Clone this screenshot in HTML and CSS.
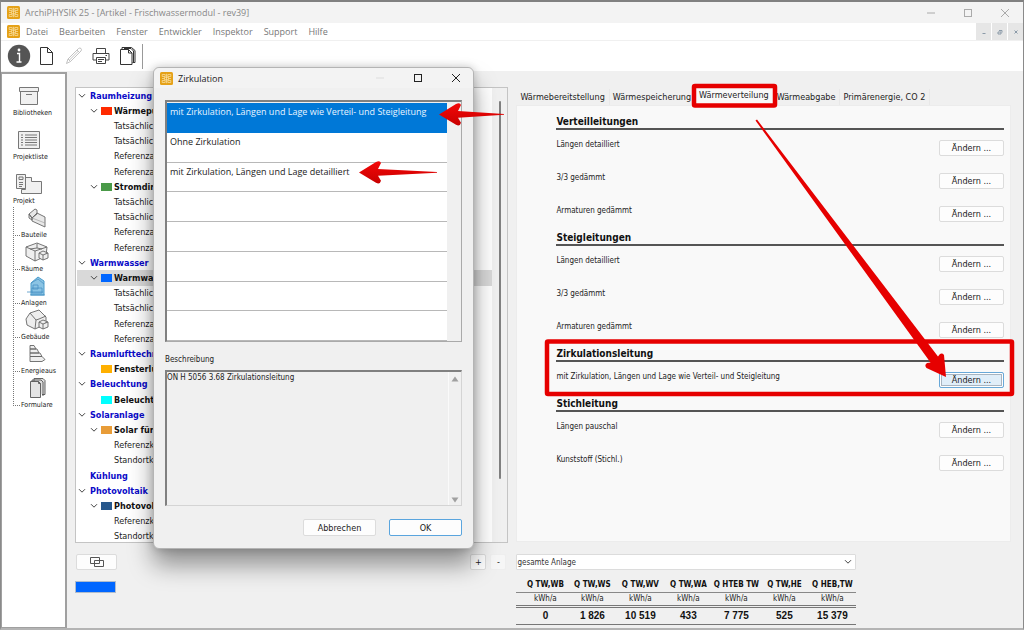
FILE: index.html
```html
<!DOCTYPE html>
<html lang="de">
<head>
<meta charset="utf-8">
<title>ArchiPHYSIK 25</title>
<link rel="stylesheet" href="styles.css">
</head>
<body>
<svg class="defs" aria-hidden="true">
  <symbol id="logo" viewBox="0 0 13 13">
    <rect width="13" height="13" rx="1.5" fill="#e5a117"/>
    <g fill="none" stroke="#fbe3ab" stroke-width=".7">
      <path d="M2.2 2.5h3v2h-3zM7.8 2.5h3v2h-3zM2.2 8.5h3v2h-3zM7.8 8.5h3v2h-3z"/>
      <path d="M6.5 1.8v9.4M4.5 5.3h4v2.4h-4zM2 6.5h2.5M8.5 6.5H11"/>
    </g>
  </symbol>
  <symbol id="chev" viewBox="0 0 8 6"><path d="M1 1.2l3 3 3-3" fill="none" stroke="#444" stroke-width="1"/></symbol>
  <linearGradient id="red" x1="0" y1="0" x2="0" y2="1"><stop offset="0" stop-color="#f40808"/><stop offset="1" stop-color="#c80000"/></linearGradient>
</svg>

<div class="window">
  <header class="titlebar">
    <svg class="logo"><use href="#logo"/></svg>
    <span class="grow">ArchiPHYSIK 25 - [Artikel - Frischwassermodul - rev39]</span>
    <div class="winbtns">
      <button type="button" aria-label="Minimieren"><svg viewBox="0 0 10 10"><path d="M1 5h8"/></svg></button>
      <button type="button" aria-label="Maximieren"><svg viewBox="0 0 10 10"><rect x="1.5" y="1.5" width="7" height="7"/></svg></button>
      <button type="button" aria-label="Schließen"><svg viewBox="0 0 10 10"><path d="M1 1l8 8M9 1l-8 8"/></svg></button>
    </div>
  </header>

  <nav class="menubar">
    <svg class="logo"><use href="#logo"/></svg>
    <a href="#">Datei</a><a href="#">Bearbeiten</a><a href="#">Fenster</a><a href="#">Entwickler</a><a href="#">Inspektor</a><a href="#">Support</a><a href="#">Hilfe</a>
    <div class="mdi">
      <button type="button" aria-label="Kind minimieren"><svg viewBox="0 0 6 6"><path d="M1.500 4.500h3"/></svg></button>
      <button type="button" aria-label="Kind wiederherstellen"><svg viewBox="0 0 6 6"><path d="M2 1.500h3v2M1 3h3v2H1z"/></svg></button>
      <button type="button" aria-label="Kind schließen"><svg viewBox="0 0 6 6"><path d="M1.500 1.500l3 3M4.500 1.500l-3 3"/></svg></button>
    </div>
  </nav>

  <div class="toolbar">
    <button type="button" aria-label="Info"><svg viewBox="0 0 24 24"><circle cx="12" cy="12" r="11.200" fill="#555"/><circle cx="12" cy="6" r="1.400" fill="#fff"/><path d="M10 9.500h2.500v8M9.500 18h5" fill="none" stroke="#fff" stroke-width="1.400"/></svg></button>
    <button type="button" aria-label="Neu"><svg viewBox="0 0 24 24"><path d="M6.500 3.500h7l5 5v12h-12zM13.500 3.500v5h5" fill="#fff" stroke="#333"/></svg></button>
    <button type="button" aria-label="Bearbeiten"><svg viewBox="0 0 24 24"><path d="M5.500 19.500l1.500-4.500L17.500 4.500q1.500-1 2.500 0t0 2.500L9.500 17.500zM7 15l2.500 2.500M16 6l2.500 2.500M8.500 16L17.500 7" fill="none" stroke="#bbb" stroke-width=".9"/></svg></button>
    <button type="button" aria-label="Drucken"><svg viewBox="0 0 24 24"><path d="M8.500 9V4.500h9V9M8 16H5V9.500h16V16h-3M8.500 13.500h9v6h-9zM10 15.500h6M10 17.500h4M17.500 11.500h1.500" fill="none" stroke="#444"/></svg></button>
    <button type="button" aria-label="Dokumente"><svg viewBox="0 0 24 24"><path d="M5.500 5.500h8l3.500 3.500v11.500H5.500zM13.500 5.500v3.500h3.500M7 5V3.500h9.500l3.500 3V18.500H17.500M9 4.500h7l2.500 2.500v11" fill="none" stroke="#333"/></svg></button>
    <span class="sep"></span>
  </div>

  <main class="body">
    <aside class="sidebar">
      <ul class="nav">
        <li><a href="#"><svg class="i28" viewBox="0 0 28 20"><path d="M4.500 1.500h19v4h-19zM5.500 5.500h17v13h-17zM11 8.500h6" fill="#f0f0f0" stroke="#777"/></svg><span>Bibliotheken</span></a></li>
        <li><a href="#"><svg class="i28" viewBox="0 0 28 20"><path d="M3.500 1.500h21v17h-21z" fill="#f0f0f0" stroke="#777"/><path d="M6 5h2M6 7.500h2M6 10h2M6 12.500h2M6 15h2M10 5h12M10 7.500h12M10 10h12M10 12.500h12M10 15h12" stroke="#777"/></svg><span>Projektliste</span></a></li>
        <li><a href="#"><svg class="i28" viewBox="0 0 28 20"><path d="M10.500 3.500h6v4h10v12h-20v-4h4z" fill="#f0f0f0" stroke="#777"/><path d="M1.500.500h9v14h-9z" fill="#f0f0f0" stroke="#777"/><path d="M4 3h4v2.500H4zM4 8.500h4M4 10.500h4M4 12.500h3" fill="none" stroke="#777"/></svg><span>Projekt</span></a></li>
      </ul>
      <ul class="nav sub">
        <li><a href="#"><svg class="i24" viewBox="0 0 24 22"><path d="M4 7l6-5 2 1v4l-5 4zM4 7v4l3 2v-2zM12 6l8 4v10L7 14v-3z" fill="#e8e8e8" stroke="#666" stroke-width=".9"/><path d="M7 11l13 5" stroke="#999" fill="none" stroke-width=".6"/></svg><span>Bauteile</span></a></li>
        <li><a href="#"><svg class="i24" viewBox="0 0 24 22"><path d="M1 6l11-4 10 4-1 9-11 5-9-5z" fill="#eee" stroke="#666" stroke-width=".9"/><path d="M1 6l9 4 12-4M10 10v10M12 2v5l-7 1M12 7l5 1M14 12l4-2 5 2v5l-5 2-4-2zM14 12l4 2 5-2M18 14v5" fill="#eee" stroke="#666" stroke-width=".9"/></svg><span>Räume</span></a></li>
        <li><a href="#"><svg class="i24" viewBox="0 0 24 22"><path d="M6 8l7-6 6 4v14H6z" fill="#8bc4e4" stroke="#4a9ccb"/><path d="M6 8l7-4 6 5M2 17h16M8 10h5v4H8zM7 13h10v5H7zM5 20h15" fill="none" stroke="#4a93c4" stroke-width=".8"/></svg><span>Anlagen</span></a></li>
        <li><a href="#"><svg class="i24" viewBox="0 0 24 22"><path d="M1 10l4-6 9-3 7 7v7l-11 5-8-4z" fill="#eee" stroke="#666" stroke-width=".9"/><path d="M5 4l6 7-1 9M11 11l3-1 7-3M14 13l4-2 5 2v5l-5 2-4-2zM14 13l4 2 5-2M18 15v5" fill="#eee" stroke="#666" stroke-width=".9"/></svg><span>Gebäude</span></a></li>
        <li><a href="#"><svg class="i24" viewBox="0 0 24 22"><path d="M5 2.500h4l2 3.500H5zM5 6h7l2 4H5zM5 10h10l2 3.500H5zM5 13.500h12l3 3-3 2H5z" fill="#eee" stroke="#666" stroke-width=".9"/></svg><span>Energieaus</span></a></li>
        <li><a href="#"><svg class="i24" viewBox="0 0 24 22"><path d="M9 4V1.500h9l2 2v14h-3M7 5V3h9l2 2v14" fill="#ddd" stroke="#555" stroke-width=".9"/><path d="M5.500 4.500h8l2 2v14h-10zM13.500 4.500v2h2" fill="#e4e4e4" stroke="#555" stroke-width=".9"/></svg><span>Formulare</span></a></li>
      </ul>
    </aside>

    <section class="left">
      <div class="treebox">
        <ul class="tree">
          <li class="g"><svg class="chev"><use href="#chev"/></svg>Raumheizung</li>
          <li class="s"><svg class="chev"><use href="#chev"/></svg><i class="sw red"></i>Wärmepu</li>
          <li>Tatsächlich</li><li>Tatsächlich</li><li>Referenza</li><li>Referenza</li>
          <li class="s"><svg class="chev"><use href="#chev"/></svg><i class="sw green"></i>Stromdire</li>
          <li>Tatsächlich</li><li>Tatsächlich</li><li>Referenza</li><li>Referenza</li>
          <li class="g"><svg class="chev"><use href="#chev"/></svg>Warmwasser</li>
          <li class="s sel"><svg class="chev"><use href="#chev"/></svg><i class="sw blue"></i>Warmwa</li>
          <li>Tatsächlich</li><li>Tatsächlich</li><li>Referenza</li><li>Referenza</li>
          <li class="g"><svg class="chev"><use href="#chev"/></svg>Raumlufttechn</li>
          <li class="s"><span class="chev"></span><i class="sw amber"></i>Fensterlü</li>
          <li class="g"><svg class="chev"><use href="#chev"/></svg>Beleuchtung</li>
          <li class="s"><span class="chev"></span><i class="sw cyan"></i>Beleucht</li>
          <li class="g"><svg class="chev"><use href="#chev"/></svg>Solaranlage</li>
          <li class="s"><svg class="chev"><use href="#chev"/></svg><i class="sw orange"></i>Solar für d</li>
          <li>Referenzk</li><li>Standortk</li>
          <li class="g"><span class="chev"></span>Kühlung</li>
          <li class="g"><svg class="chev"><use href="#chev"/></svg>Photovoltaik</li>
          <li class="s"><svg class="chev"><use href="#chev"/></svg><i class="sw navy"></i>Photovolt</li>
          <li>Referenzk</li><li>Standortk</li>
        </ul>
        <div class="track"><span class="thumb"></span></div>
      </div>
      <div class="foot">
        <div class="footrow">
          <button type="button" class="btn copy" aria-label="Duplizieren"><svg viewBox="0 0 14 10"><path d="M.5.500h9v6h-9zM4.500 3.500h9v6h-9z" fill="none" stroke="#555"/></svg></button>
          <span class="grow"></span>
          <button type="button" class="btn sq">+</button>
          <button type="button" class="btn sq dim">-</button>
        </div>
        <div class="colour"></div>
      </div>
    </section>

    <section class="right">
      <div class="tabs" role="tablist">
        <button type="button" role="tab">Wärmebereitstellung</button>
        <button type="button" role="tab">Wärmespeicherung</button>
        <button type="button" role="tab" class="active" aria-selected="true">Wärmeverteilung</button>
        <button type="button" role="tab">Wärmeabgabe</button>
        <button type="button" role="tab">Primärenergie, CO 2</button>
      </div>
      <div class="panel">
        <h2>Verteilleitungen</h2>
        <div class="row"><span>Längen detailliert</span><button type="button" class="btn">Ändern ...</button></div>
        <div class="row"><span>3/3 gedämmt</span><button type="button" class="btn">Ändern ...</button></div>
        <div class="row"><span>Armaturen gedämmt</span><button type="button" class="btn">Ändern ...</button></div>
        <h2>Steigleitungen</h2>
        <div class="row"><span>Längen detailliert</span><button type="button" class="btn">Ändern ...</button></div>
        <div class="row"><span>3/3 gedämmt</span><button type="button" class="btn">Ändern ...</button></div>
        <div class="row"><span>Armaturen gedämmt</span><button type="button" class="btn">Ändern ...</button></div>
        <h2>Zirkulationsleitung</h2>
        <div class="row"><span>mit Zirkulation, Längen und Lage wie Verteil- und Steigleitung</span><button type="button" class="btn focus">Ändern ...</button></div>
        <h2>Stichleitung</h2>
        <div class="row"><span>Längen pauschal</span><button type="button" class="btn">Ändern ...</button></div>
        <div class="row"><span>Kunststoff (Stichl.)</span><button type="button" class="btn">Ändern ...</button></div>
      </div>
      <div class="results">
        <div class="selectwrap">
          <select aria-label="Anlage"><option>gesamte Anlage</option></select>
          <svg class="chev"><use href="#chev"/></svg>
        </div>
        <table>
          <thead>
            <tr><th>Q TW,WB</th><th>Q TW,WS</th><th>Q TW,WV</th><th>Q TW,WA</th><th>Q HTEB TW</th><th>Q TW,HE</th><th>Q HEB,TW</th></tr>
          </thead>
          <tbody>
            <tr class="unit"><td>kWh/a</td><td>kWh/a</td><td>kWh/a</td><td>kWh/a</td><td>kWh/a</td><td>kWh/a</td><td>kWh/a</td></tr>
            <tr class="val"><td>0</td><td>1 826</td><td>10 519</td><td>433</td><td>7 775</td><td>525</td><td>15 379</td></tr>
          </tbody>
        </table>
      </div>
    </section>
  </main>

  <div class="dialog" role="dialog" aria-labelledby="dlg-title">
    <div class="dlg-title">
      <svg class="logo"><use href="#logo"/></svg>
      <span class="grow" id="dlg-title">Zirkulation</span>
      <button type="button" aria-label="Minimieren" class="off"><svg viewBox="0 0 10 10"><path d="M1 5h8"/></svg></button>
      <button type="button" aria-label="Maximieren"><svg viewBox="0 0 10 10"><rect x="1.500" y="1.500" width="7" height="7"/></svg></button>
      <button type="button" aria-label="Schließen"><svg viewBox="0 0 10 10"><path d="M1 1l8 8M9 1l-8 8"/></svg></button>
    </div>
    <ul class="options" role="listbox" aria-label="Zirkulation">
      <li role="option" class="on" aria-selected="true">mit Zirkulation, Längen und Lage wie Verteil- und Steigleitung</li>
      <li role="option">Ohne Zirkulation</li>
      <li role="option">mit Zirkulation, Längen und Lage detailliert</li>
      <li></li><li></li><li></li><li></li><li></li>
    </ul>
    <label class="desc-label" for="desc">Beschreibung</label>
    <div class="descbox">
      <textarea id="desc" readonly>ON H 5056 3.68 Zirkulationsleitung</textarea>
      <div class="arrows">
        <svg viewBox="0 0 8 6"><path d="M.5 5.500h7L4 .5z"/></svg>
        <svg viewBox="0 0 8 6"><path d="M.5.500h7L4 5.500z"/></svg>
      </div>
    </div>
    <div class="actions">
      <button type="button" class="btn">Abbrechen</button>
      <button type="button" class="btn primary">OK</button>
    </div>
  </div>

  <svg class="marks" viewBox="0 0 1024 630" aria-hidden="true">
    <rect x="694" y="86" width="81" height="19.500" rx="1" fill="none" stroke="#e60000" stroke-width="4.500"/>
    <rect x="547" y="341.500" width="465" height="52.500" rx="1" fill="none" stroke="#e60000" stroke-width="4.500"/>
    <path d="M755.500 120.500l1.500-1L938 356.500l1.500-2q2.500-2 4.500 0.500L946 377l-19.500-9q-2.500-3 .5-5l3.500-.5z" fill="#e60000"/>
    <path d="M439 114.500L456 104q4-2 5 1l-3 6 46 3v.8l-46 3 3 5q-1 4-5 2z" fill="url(#red)"/>
    <path d="M359 172.500L376 162q4-2 5 1l-3 6 59 3v.8l-59 3 3 5q-1 4-5 2z" fill="url(#red)"/>
  </svg>
</div>
</body>
</html>
```
FILE: styles.css
```css
* { box-sizing: border-box; }
html, body { height: 100%; }
body { margin: 0; background: #f0f0f0; font-family: "DejaVu Sans Condensed", "DejaVu Sans", sans-serif; font-size: 9px; color: #222; }
ul { list-style: none; margin: 0; padding: 0; }
button { font: inherit; color: inherit; border: 0; background: none; padding: 0; }
a { color: inherit; text-decoration: none; }
svg { display: block; }
.defs { position: absolute; width: 0; height: 0; }
.grow { flex: 1; }

.window { position: relative; display: flex; flex-direction: column; min-height: 100vh; border: 1px solid #8a8a8a; border-top: 2px solid #808080; border-bottom: 2px solid #b4b4b4; background: #f0f0f0; overflow: hidden; }
.logo { width: 13px; height: 13px; flex: none; }

.titlebar { display: flex; align-items: center; gap: 5px; height: 21px; padding-left: 6px; background: #f3f3f3; font-family: "Open Sans", sans-serif; font-size: 9px; color: #888; }
.winbtns { display: flex; }
.winbtns button { width: 37px; display: grid; place-items: center; }
.winbtns svg { width: 10px; height: 10px; fill: none; stroke: #aaa; }

.menubar { display: flex; align-items: center; gap: 11px; height: 17px; padding-left: 6px; background: #fff; font-family: "Open Sans", sans-serif; font-size: 9px; color: #777; }
.menubar .logo { margin-right: -5px; }
.mdi { display: flex; gap: 1px; margin-left: auto; height: 100%; }
.mdi button { width: 15px; background: #e6e6e6; display: grid; place-items: center; }
.mdi svg { width: 6px; height: 6px; fill: none; stroke: #8b9aa8; }

.toolbar { display: flex; align-items: center; gap: 3px; height: 31px; padding-left: 6px; background: #fff; border-top: 1px solid #f0f0f0; }
.toolbar button, .toolbar svg { width: 24px; height: 24px; }
.toolbar .sep { width: 1px; height: 25px; background: #999; }

.body { flex: 1; display: grid; grid-template-columns: 66px minmax(0, 433fr) minmax(0, 493fr); padding-right: 12px; }
.sidebar { background: #fff; border: 2px solid #a0a0a0; border-left-width: 1px; border-bottom-width: 1px; font-size: 7px; color: #222; margin-top: 1px; padding-top: 1px; }
.nav { padding-left: 11px; }
.nav a { display: flex; flex-direction: column; justify-content: flex-end; height: 44px; }
.nav span { line-height: 12px; }
.i28 { width: 28px; height: 20px; margin: 0 0 1px 2px; }
.i24 { width: 24px; height: 22px; margin-left: 12px; }
.nav.sub { margin-left: 11px; padding-left: 0; background: repeating-linear-gradient(#777 0 1px, transparent 1px 2px) no-repeat 0 0 / 1px calc(100% - 6px); }
.nav.sub a { height: 34px; }
.nav.sub span { display: flex; align-items: center; gap: 1px; }
.nav.sub span::before { content: ""; width: 7px; border-top: 1px dotted #777; }

.left { display: flex; flex-direction: column; padding-top: 16px; margin-left: 8px; }
.treebox { flex: 1; display: flex; background: #fff; border: 1px solid #c4c4c4; }
.tree { flex: 1; display: grid; grid-auto-rows: 1fr; margin-bottom: -2px; padding-left: 1px; white-space: nowrap; }
.tree li { display: flex; align-items: center; min-height: 0; line-height: 14px; padding-left: 37px; }
.tree .g, .tree .s { font-weight: bold; color: #111; }
.tree .g { padding-left: 1px; color: #0a0ac8; }
.tree .s { padding-left: 13px; }
.tree .sel { background: #d9d9d9; }
.chev { width: 8px; height: 6px; flex: none; }
.tree .g .chev { margin-right: 4px; }
.tree .s .chev { margin-right: 3px; }
.sw { width: 11px; height: 8px; margin-right: 2px; }
.red { background: #ff2a00; } .green { background: #4a9a48; } .blue { background: #0066ff; }
.amber { background: #ffb000; } .cyan { background: #00ffff; } .orange { background: #e89c38; } .navy { background: #28588c; }
.track { width: 15px; background: #f0f0f0; padding: 13px 6px 63px 7px; display: flex; }
.thumb { width: 2px; background: #808080; border-radius: 1px; }
.foot { height: 85px; padding-top: 11px; }
.footrow { display: flex; gap: 4px; padding: 0 2px 0 1px; }
.btn { height: 16px; background: #fdfdfd; border: 1px solid #dcdcdc; border-radius: 2px; }
.copy { width: 41px; display: grid; place-items: center; }
.copy svg { width: 14px; height: 10px; }
.sq { width: 16px; }
.dim { background: #f6f6f6; border-color: #eee; }
.colour { width: 41px; height: 12px; margin-top: 11px; background: #0066ff; border: 1px solid #b0bccc; }

.right { display: flex; flex-direction: column; margin-left: 8px; padding-top: 15px; }
.tabs { display: flex; height: 19px; align-items: flex-end; white-space: nowrap; padding-left: 1px; }
.tabs button { height: 16px; padding: 0 4px 0 3px; border-right: 1px solid #e8e8e8; }
.tabs .active { height: 19px; background: #f9f9f9; padding-bottom: 1px; }
.panel { flex: 1; background: #f9f9f9; border: 1px solid #ececec; padding: 9px 6px 0 39px; }
.panel h2 { margin: 0 0 3px; height: 15px; line-height: 14px; font-size: 10px; font-weight: bold; color: #111; border-bottom: 2px solid #555; }
.row { display: flex; justify-content: space-between; align-items: flex-start; height: 33px; padding-top: 7px; }
.row span { font-size: 8px; line-height: 10px; }
.row .btn { width: 65px; }
.row + h2 { margin-top: -1px; }
.btn.focus { background: #e0eef9; border-color: #68a8d8; box-shadow: inset 0 0 0 1px #fff, inset 0 0 0 2px #a8b4c0; }

.results { height: 86px; padding-top: 12px; width: 340px; }
.selectwrap { display: flex; align-items: center; height: 16px; background: #fff; border: 1px solid #dcdcdc; border-radius: 1px; padding-right: 3px; }
.selectwrap select { flex: 1; appearance: none; border: 0; padding: 0; background: none; font: inherit; font-size: 8px; color: #333; }
table { width: 100%; margin-top: 8px; border-collapse: collapse; table-layout: fixed; text-align: center; white-space: nowrap; }
th, td { padding: 0; font-size: 8px; line-height: 14px; height: 14px; }
th:first-child { width: 52px; }
th:first-child, td:first-child { padding-left: 6px; }
th { border-bottom: 1px solid #888; color: #111; }
.unit td { border-bottom: 3px double #777; line-height: 12px; height: 14px; }
.val td { font: bold 10px/16px "Liberation Sans", sans-serif; color: #111; border-bottom: 1px solid #777; }

.dialog { position: absolute; left: 152px; top: 65px; width: 321px; height: 482px; display: flex; flex-direction: column; padding: 0 11px 12px; background: #f0f0f0; border: 1px solid #b4b4b4; border-radius: 6px; box-shadow: 0 16px 24px rgba(0, 0, 0, .4), 0 0 8px rgba(0, 0, 0, .2); }
.dlg-title { display: flex; align-items: center; gap: 5px; height: 20px; margin: 0 -11px; padding: 0 1px 0 6px; background: #f3f3f3; border-radius: 6px 6px 0 0; font-family: "Open Sans", sans-serif; font-size: 9px; }
.dlg-title button { width: 33px; display: grid; place-items: center; }
.dlg-title svg:not(.logo) { width: 10px; height: 10px; fill: none; stroke: #222; }
.dlg-title .off svg:not(.logo) { stroke: #ddd; }
.options { height: 242px; margin-top: 12px; display: grid; grid-auto-rows: 1fr; padding: 1px 14px 0 0; border: 2px solid #808080; border-width: 2px 1px 1px 2px; border-right-color: #aaa; border-bottom-color: #aaa; font-family: "Open Sans", sans-serif; font-size: 9px; white-space: nowrap; }
.options li { background: #fff; border-bottom: 1px solid #b8b8b8; padding: 2px 3px; line-height: 14px; }
.options .on { background: #0078d7; color: #e8f4ff; border-color: #0078d7; }
.desc-label { margin-top: 12px; line-height: 12px; font-size: 8px; }
.descbox { flex: 1; display: flex; margin-top: 4px; border: 1px solid #d4d4d4; border-left: 2px solid #808080; border-top: 2px solid #808080; }
.descbox textarea { flex: 1; min-width: 0; resize: none; border: 0; padding: 0; background: none; font: 8px/12px "DejaVu Sans Condensed", "DejaVu Sans", sans-serif; color: #222; outline: 0; }
.arrows { width: 13px; display: flex; flex-direction: column; justify-content: space-between; align-items: center; padding: 4px 0 2px; border-left: 1px solid #fafafa; }
.arrows svg { width: 8px; height: 6px; fill: #a0a0a0; }
.actions { display: flex; justify-content: flex-end; gap: 13px; margin-top: 13px; }
.actions .btn { width: 73px; height: 17px; }
.actions .primary { border-color: #5aa5de; }

.marks { position: absolute; left: -1px; top: -2px; width: 1024px; height: 630px; pointer-events: none; }
```
